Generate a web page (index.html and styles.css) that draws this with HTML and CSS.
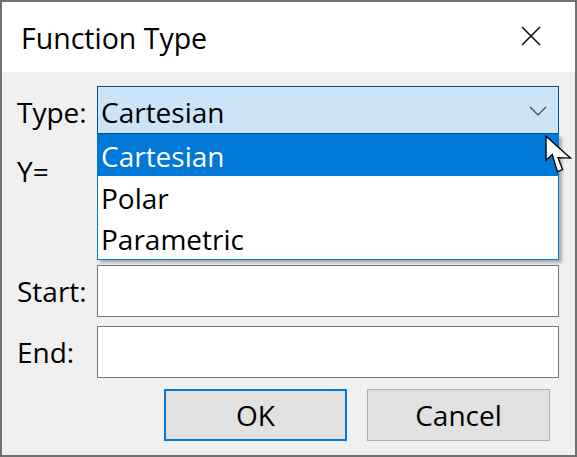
FILE: index.html
```html
<!DOCTYPE html>
<html>
<head>
<meta charset="utf-8">
<link rel="stylesheet" href="styles.css">
</head>
<body>
<div class="window">
  <div class="titlebar">
    <span class="title">Function Type</span>
    <svg class="close" width="20" height="20" viewBox="0 0 20 20"><path d="M1 1 L19 19 M19 1 L1 19" stroke="#111" stroke-width="1.6" fill="none"/></svg>
  </div>
  <div class="content">
    <div class="label label-mid label-type">Type:</div>
    <div class="combo-wrap">
      <div class="combo">
        <span class="combo-text">Cartesian</span>
        <svg class="chev" width="18" height="10" viewBox="0 0 18 10"><polyline points="1,1 9,9 17,1" stroke="#444" stroke-width="1.2" fill="none"/></svg>
      </div>
      <ul class="dropdown">
        <li class="item selected">Cartesian</li>
        <li class="item">Polar</li>
        <li class="item">Parametric</li>
      </ul>
      <svg class="cursor" width="28" height="42" viewBox="0 0 27 38"><path d="M1 1 L1 24 L7 18.5 L12 35 L17 33 L12.5 21.5 L24.5 22 Z" fill="#fff" stroke="#000" stroke-width="1.3" stroke-linejoin="miter"/></svg>
    </div>
    <div class="label label-top">Y=</div>
    <div class="box ybox"></div>
    <div class="label label-mid">Start:</div>
    <div class="box input"></div>
    <div class="label label-mid">End:</div>
    <div class="box input"></div>
    <div class="buttons">
      <button class="btn btn-default">OK</button>
      <button class="btn">Cancel</button>
    </div>
  </div>
</div>
</body>
</html>
```

FILE: styles.css
```css
* { box-sizing: border-box; }
html, body { margin: 0; padding: 0; background: #f0f0f0; }
body { font-family: "Open Sans", "Noto Sans", sans-serif; font-size: 28px; color: #000; }
.window {
  width: 577px; height: 457px;
  border: 2px solid #707070;
  display: flex; flex-direction: column;
  background: #f0f0f0;
}
.titlebar {
  height: 70px; background: #fff;
  display: flex; align-items: center; justify-content: space-between;
  padding: 3px 34px 0 19px;
}
.title { font-size: 28.5px; line-height: 1; }
.close { margin-top: -6px; }
.content {
  padding: 14px 16px 0 15px;
  display: grid;
  grid-template-columns: 80px 462px;
  grid-template-rows: 48px 113px 52px 52px auto;
  row-gap: 9px;
}
.label { line-height: 1; }
.label-mid { display: flex; align-items: center; padding-bottom: 1px; }
.label-type { padding-top: 3px; padding-bottom: 0; }
.label-top { padding-top: 14px; }
.combo-wrap { position: relative; }
.combo {
  height: 48px;
  background: #cce4f7;
  border: 1px solid #005499;
  display: flex; align-items: center; justify-content: space-between;
  padding: 0 11px 0 3px;
}
.combo-text { line-height: 1; padding-top: 3px; }
.chev { margin-top: 2px; }
.dropdown {
  position: absolute; left: 0; top: 48px; width: 462px;
  margin: 0; padding: 0; list-style: none;
  background: #fff;
  border: 1px solid #0078d7; border-top: none;
  box-shadow: 3px 3px 3px rgba(0,0,0,0.28);
  z-index: 2;
}
.item {
  height: 41.5px; line-height: 44px;
  padding-left: 3px;
}
.item.selected { background: #0078d7; color: #fff; }
.cursor { position: absolute; left: 448px; top: 48px; z-index: 3; }
.box { background: #fff; border: 1px solid #7a7a7a; }
.buttons {
  grid-column: 1 / 3;
  display: flex; justify-content: flex-end; gap: 20px;
  margin-right: 9px; margin-top: 2px;
}
.btn {
  width: 183px; height: 52px;
  font-family: inherit; font-size: 28px;
  background: #e1e1e1;
  border: 1px solid #adadad;
  color: #000; padding: 0;
}
.btn-default { border: 2px solid #0078d7; }
```
